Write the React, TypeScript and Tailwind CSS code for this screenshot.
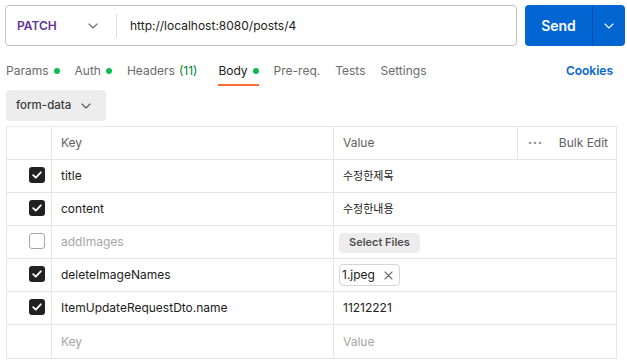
const rows = [
  { checked: true, key: "title", value: "수정한제목", type: "ko" },
  { checked: true, key: "content", value: "수정한내용", type: "ko" },
  { checked: false, key: "addImages", value: "", type: "file" },
  { checked: true, key: "deleteImageNames", value: "1.jpeg", type: "chip" },
  { checked: true, key: "ItemUpdateRequestDto.name", value: "11212221", type: "text" },
];

const Chevron = ({ className }: { className?: string }) => (
  <svg className={className} width="10" height="6" viewBox="0 0 10 6" fill="none">
    <path d="M1 1l4 4 4-4" stroke="currentColor" strokeWidth="1.1" strokeLinecap="round" strokeLinejoin="round" />
  </svg>
);

const Check = ({ checked }: { checked: boolean }) =>
  checked ? (
    <div className="flex h-[16px] w-[16px] items-center justify-center rounded-[3px] bg-[#212121]">
      <svg width="10" height="8" viewBox="0 0 10 8" fill="none">
        <path d="M1.2 4.2l2.6 2.5L8.8 1.3" stroke="white" strokeWidth="1.8" strokeLinecap="round" strokeLinejoin="round" />
      </svg>
    </div>
  ) : (
    <div className="h-[16px] w-[16px] rounded-[3px] border border-[#a6a6a6] bg-white"></div>
  );

const Dot = () => <span className="ml-[5px] inline-block h-[6px] w-[6px] rounded-full bg-[#0cbb52]"></span>;

export default function App() {
  return (
    <div className="h-[362px] w-[627px] bg-white font-['Inter','Noto_Sans_CJK_KR',sans-serif] text-[12px] text-[#212121]">
      {/* url bar */}
      <div className="flex gap-[8px] pl-[5px] pt-[5px]">
        <div className="flex h-[41px] w-[512px] shrink-0 items-center rounded-[4px] border border-[#c2c2c2]">
          <div className="flex w-[110px] items-center justify-between pl-[11px] pr-[18px]">
            <span className="text-[12px] font-semibold text-[#623497]">PATCH</span>
            <Chevron className="text-[#6b6b6b]" />
          </div>
          <div className="h-[24px] w-px bg-[#e0e0e0]"></div>
          <span className="pl-[13px] text-[12px] text-[#212121]">http://localhost:8080/posts/4</span>
        </div>
        <div className="flex h-[41px] w-[100px] shrink-0 overflow-hidden rounded-[4px] bg-[#0265d2] text-white">
          <div className="flex w-[67px] items-center justify-center text-[14px] font-semibold">Send</div>
          <div className="w-px bg-[#0152ad]"></div>
          <div className="flex flex-1 items-center justify-center">
            <Chevron />
          </div>
        </div>
      </div>

      {/* tabs */}
      <div className="mt-[9px] flex h-[31px] items-stretch justify-between pl-[6px] pr-[14px]">
        <div className="flex gap-[15px] text-[#6b6b6b]">
          <div className="flex items-center">Params<Dot /></div>
          <div className="flex items-center">Auth<Dot /></div>
          <div className="flex items-center">
            Headers<span className="ml-[4px] text-[#007f31]">(11)</span>
          </div>
          <div className="relative ml-[6px] flex items-center text-[#212121]">
            Body<Dot />
            <div className="absolute bottom-0 left-0 right-0 h-[2px] bg-[#ff6c37]"></div>
          </div>
          <div className="flex items-center">Pre-req.</div>
          <div className="flex items-center">Tests</div>
          <div className="flex items-center">Settings</div>
        </div>
        <div className="flex items-center font-semibold text-[#0265d2]">Cookies</div>
      </div>

      {/* body type */}
      <div className="px-[6px] pt-[4px]">
        <div className="flex h-[31px] w-[100px] items-center justify-between rounded-[4px] bg-[#ededed] pl-[10px] pr-[15px] text-[11.5px] font-medium text-[#3b3b3b]">
          form-data
          <Chevron className="text-[#555]" />
        </div>
      </div>

      {/* table */}
      <div className="ml-[6px] mt-[5px] w-[611px] border border-[#e6e6e6]">
        <div className="flex h-[33px] border-b border-[#e6e6e6] text-[#5f5f5f]">
          <div className="w-[45px] border-r border-[#e6e6e6]"></div>
          <div className="flex w-[282px] items-center border-r border-[#e6e6e6] pl-[9px]">Key</div>
          <div className="flex w-[184px] items-center border-r border-[#e6e6e6] pl-[9px]">Value</div>
          <div className="flex flex-1 items-center whitespace-nowrap pl-[10px]">
            <span className="text-[7px] tracking-[1px] text-[#8a8a8a]">•••</span>
            <span className="ml-[16px]">Bulk Edit</span>
          </div>
        </div>
        {rows.map((r, i) => (
          <div key={i} className="flex h-[33px] border-b border-[#e6e6e6]">
            <div className="flex w-[45px] items-center justify-end border-r border-[#e6e6e6] pr-[6px] pb-[2px]">
              <Check checked={r.checked} />
            </div>
            <div className={`flex w-[282px] items-center border-r border-[#e6e6e6] pl-[9px] ${r.checked ? "text-[#212121]" : "text-[#a6a6a6]"}`}>
              {r.key}
            </div>
            <div className="flex flex-1 items-center pl-[9px]">
              {r.type === "text" && <span>{r.value}</span>}
              {r.type === "ko" && <span className="text-[11px]">{r.value}</span>}
              {r.type === "file" && (
                <div className="-ml-[4px] mt-[1px] flex h-[20px] items-center rounded-[4px] bg-[#ededed] px-[10px] text-[11px] font-semibold text-[#505050]">
                  Select Files
                </div>
              )}
              {r.type === "chip" && (
                <div className="-ml-[4px] flex h-[22px] items-center rounded-[4px] border border-[#d6d6d6] pl-[2px] pr-[6px]">
                  {r.value}
                  <svg className="ml-[9px]" width="9" height="9" viewBox="0 0 9 9" fill="none">
                    <path d="M1 1l7 7M8 1L1 8" stroke="#6b6b6b" strokeWidth="1.1" strokeLinecap="round" />
                  </svg>
                </div>
              )}
            </div>
          </div>
        ))}
        <div className="flex h-[33px] text-[#a6a6a6]">
          <div className="w-[45px] border-r border-[#e6e6e6]"></div>
          <div className="flex w-[282px] items-center border-r border-[#e6e6e6] pl-[9px]">Key</div>
          <div className="flex flex-1 items-center pl-[9px]">Value</div>
        </div>
      </div>
    </div>
  );
}
